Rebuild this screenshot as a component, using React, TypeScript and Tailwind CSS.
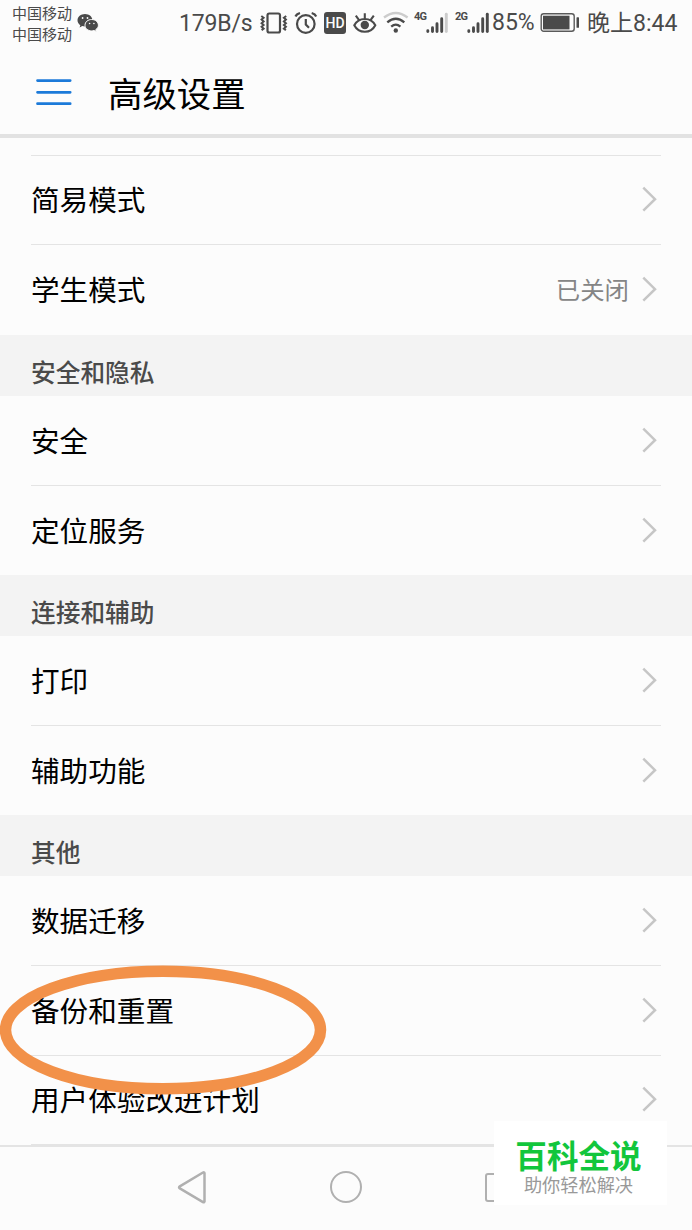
import { ReactNode } from 'react';
import clsx from 'clsx';

type Item = {
  label: string;
  value?: string;
  height: string;
  line?: boolean;
};

type Group = {
  title?: string;
  items: Item[];
};

const groups: Group[] = [
  {
    items: [
      { label: '简易模式', height: 'h-[89px]', line: true },
      { label: '学生模式', value: '已关闭', height: 'h-[90px]' },
    ],
  },
  {
    title: '安全和隐私',
    items: [
      { label: '安全', height: 'h-[90px]', line: true },
      { label: '定位服务', height: 'h-[89px]' },
    ],
  },
  {
    title: '连接和辅助',
    items: [
      { label: '打印', height: 'h-[90px]', line: true },
      { label: '辅助功能', height: 'h-[89px]' },
    ],
  },
  {
    title: '其他',
    items: [
      { label: '数据迁移', height: 'h-[90px]', line: true },
      { label: '备份和重置', height: 'h-[90px]', line: true },
      { label: '用户体验改进计划', height: 'h-[89px]', line: true },
    ],
  },
];

const WechatIcon = () => (
  <svg className="ml-1 mt-[13px] h-5 w-[22px] shrink-0" viewBox="0 0 22 20">
    <path d="M8 1C3.800 1 .5 3.800.5 7.300c0 2 1.100 3.700 2.800 4.900L2.600 14.500l2.700-1.400c.9.300 1.800.4 2.700.4 4.200 0 7.500-2.800 7.500-6.200S12.200 1 8 1z" fill="#4a4a4a" />
    <path
      d="M14.700 6.500c-3.800 0-6.700 2.500-6.700 5.700s2.900 5.700 6.700 5.700c.8 0 1.600-.1 2.300-.4l2.300 1.200-.6-2c1.600-1.100 2.700-2.700 2.700-4.500 0-3.200-2.900-5.700-6.700-5.700z"
      fill="#4a4a4a"
      stroke="#fcfcfc"
      strokeWidth="1"
    />
    <g fill="#fcfcfc">
      <circle cx="5.600" cy="5" r=".9" />
      <circle cx="10.500" cy="5" r=".9" />
      <circle cx="12.600" cy="10.500" r=".8" />
      <circle cx="16.900" cy="10.500" r=".8" />
    </g>
  </svg>
);

const VibrateIcon = () => (
  <svg className="ml-[8px] h-6 w-[28px] shrink-0" viewBox="0 0 28 24" fill="none" stroke="#4a4a4a">
    <rect x="7.500" y="2.500" width="12.500" height="19" rx="1.800" strokeWidth="2.200" />
    <path d="M1.300 5l2.300 1.800-2 1.800 2 1.800-2 1.800 2 1.800-2 1.800 2 1.800-2 1.500M26.200 5l-2.300 1.800 2 1.800-2 1.800 2 1.800-2 1.800 2 1.800-2 1.800 2 1.500" strokeWidth="2" />
  </svg>
);

const AlarmIcon = () => (
  <svg className="ml-[6px] h-6 w-[24px] shrink-0" viewBox="0 0 24 24" fill="none" stroke="#4a4a4a" strokeWidth="2.200">
    <circle cx="11.800" cy="13" r="8.800" />
    <path d="M11.800 8v5.500l3.200 3.200M1.500 5.500Q2.500 3 6 2M22.200 5.500Q21.200 3 17.700 2" />
  </svg>
);

const EyeIcon = () => (
  <svg className="ml-[7px] h-6 w-[24px] shrink-0" viewBox="0 0 24 24" fill="none" stroke="#4a4a4a" strokeWidth="2.100">
    <path d="M1.300 14.300C3.500 10 7.500 8 11.800 8s8.300 2 10.500 6.300c-2.200 4.300-6.200 6.500-10.500 6.500S3.500 18.600 1.300 14.300zM11.800 7.500V2.300M5.900 8.800L2.800 4.700M17.700 8.800l3.100-4.100" />
    <circle cx="11.800" cy="14" r="4.200" fill="#4a4a4a" stroke="none" />
  </svg>
);

const WifiIcon = () => (
  <svg className="ml-[6px] h-6 w-[26px] shrink-0" viewBox="0 0 26 24" fill="none" stroke="#4a4a4a" strokeWidth="2.300">
    <path d="M1 6.500Q12.800-2.500 24.600 6.500" stroke="#cccccc" />
    <path d="M4.300 11.400Q12.800 4 21.300 11.400M8.200 15.600Q12.800 11.600 17.400 15.600" />
    <circle cx="12.800" cy="19.500" r="2.200" fill="#4a4a4a" stroke="none" />
  </svg>
);

const Signal = ({ type, weak }: { type: string; weak?: boolean }) => (
  <div className="flex h-6 shrink-0">
    <span className="w-3 font-[Roboto] text-[11px] font-bold leading-[12px] tracking-[-0.8px]">{type}</span>
    <svg className="h-6 w-[22px]" viewBox="0 0 22 24" fill="none" stroke="#4a4a4a" strokeWidth="2.900" strokeLinecap="round">
      <path d="M1.800 19.800v.8M6.500 16.800v3.800M11 12.800v7.800M15.700 7.800v12.800" />
      <path d="M20.300 3.200v17.400" stroke={weak ? '#cccccc' : '#4a4a4a'} />
    </svg>
  </div>
);

const BatteryIcon = () => (
  <svg className="ml-[6px] h-6 w-10 shrink-0" viewBox="0 0 40 24" fill="none">
    <rect x="1.200" y="2.800" width="33" height="17.500" rx="2.500" stroke="#5a5a5a" strokeWidth="1.400" />
    <rect x="3" y="4.700" width="26.500" height="13.700" fill="#4a4a4a" />
    <rect x="36.500" y="6.300" width="2.500" height="10.500" rx=".6" fill="#4a4a4a" />
  </svg>
);

const StatusBar = () => (
  <div className="flex h-[50px] text-[#4a4a4a]">
    <div className="ml-3 mt-[2px] w-[61px] whitespace-nowrap text-[15px] leading-[21px]">
      <div>中国移动</div>
      <div>中国移动</div>
    </div>
    <WechatIcon />
    <div className="ml-auto mt-[11px] flex h-6 w-[513px] items-center whitespace-nowrap font-[Roboto,'Noto_Sans_CJK_SC',sans-serif] leading-6">
      <span className="w-[73px] pt-[2px] text-[23px] tracking-[-0.15px]">179B/s</span>
      <VibrateIcon />
      <AlarmIcon />
      <span className="ml-[6px] flex h-[22px] w-[22px] shrink-0 items-center justify-center rounded-[3px] bg-[#4a4a4a] text-[14px] font-medium text-[#fcfcfc]">
        HD
      </span>
      <EyeIcon />
      <WifiIcon />
      <div className="ml-[5px]">
        <Signal type="4G" weak />
      </div>
      <div className="ml-[7px]">
        <Signal type="2G" />
      </div>
      <span className="ml-[3px] w-[42px] text-[23px]">85%</span>
      <BatteryIcon />
      <span className="ml-[7px] pt-[2px] text-[23px]">晚上8:44</span>
    </div>
  </div>
);

const Header = () => (
  <div className="flex h-[88px] items-center border-b-4 border-[#e2e2e2]">
    <svg className="ml-9 h-8 w-9" viewBox="0 0 36 32" stroke="#1c7ad9" strokeWidth="2.700" strokeLinecap="round">
      <path d="M1.500 4.600h32.700M1.500 16.300h32.700M1.500 27.700h32.700" />
    </svg>
    <h1 className="ml-9 text-[34.400px] leading-[40px] text-black">高级设置</h1>
  </div>
);

const Row = ({ label, value, height, line }: Item) => (
  <div className={clsx('mx-[31px] flex items-center pb-[2px]', height, line && 'border-b border-[#e4e4e4]')}>
    <span className="text-[28.600px] leading-10 text-black">{label}</span>
    {value && <span className="ml-auto text-[24.400px] leading-10 text-[#858585]">{value}</span>}
    <svg
      className={clsx('mr-1 h-7 w-4', value ? 'ml-3' : 'ml-auto')}
      viewBox="0 0 16 28"
      fill="none"
      stroke="#c6c6c6"
      strokeWidth="2.500"
    >
      <path d="M2.300 2.700L14 14.200L2.300 25.700" />
    </svg>
  </div>
);

const SectionTitle = ({ children }: { children: ReactNode }) => (
  <div className="flex h-[61px] items-center bg-[#f3f3f3] pl-[31px] pt-[11px] text-[24.700px] font-medium leading-9 text-[#4a4a4a]">
    {children}
  </div>
);

const NavBar = () => (
  <div className="flex h-[85px] items-center border-t-2 border-[#e4e4e4] pb-[3px]">
    <svg className="ml-[177px] h-9 w-8" viewBox="0 0 32 36" fill="none" stroke="#b0b0b0" strokeWidth="2.500" strokeLinejoin="round">
      <path d="M27.500 4v28.500q-.3 1.300-1.500.6L2.800 19.400q-1.500-1 0-2L26 3.500q1.200-.6 1.500.5z" />
    </svg>
    <div className="ml-[121px] size-8 rounded-full border-[2.500px] border-[#b0b0b0]" />
    <div className="ml-[123px] size-[29px] rounded-[3px] border-[2.500px] border-[#b0b0b0]" />
  </div>
);

const App = () => {
  return (
    <div className="relative h-[1230px] w-[692px] overflow-hidden bg-[#fcfcfc] font-['Noto_Sans_CJK_SC',sans-serif]">
      <StatusBar />
      <Header />
      <div className="mx-[31px] h-[18px] border-b border-[#e4e4e4]" />
      {groups.map((group, i) => (
        <section key={i}>
          {group.title && <SectionTitle>{group.title}</SectionTitle>}
          {group.items.map((item) => (
            <Row key={item.label} {...item} />
          ))}
        </section>
      ))}
      <NavBar />

      {/* 备份和重置を囲む丸 */}
      <svg className="absolute left-0 top-[965px] h-[131px] w-[328px]" viewBox="0 0 328 131" fill="none">
        <ellipse cx="163" cy="65" rx="157.500" ry="58.800" stroke="#f29149" strokeWidth="11.500" />
      </svg>

      <div className="absolute left-[494px] top-[1121px] flex h-[84px] w-[173px] flex-col items-center bg-white">
        <div className="-ml-[4px] mt-[15px] text-[31.600px] font-bold leading-9 text-[#12c63c]">百科全说</div>
        <div className="-ml-[4px] text-[18.200px] leading-6 text-[#999999]">助你轻松解决</div>
      </div>
    </div>
  );
};

export default App;
